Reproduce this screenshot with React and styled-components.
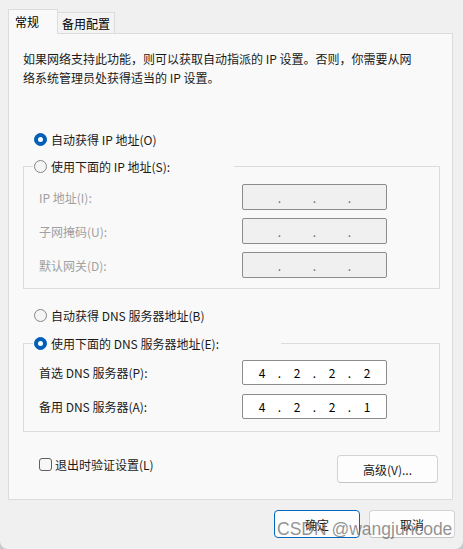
import React from 'react';
import styled, { createGlobalStyle } from 'styled-components';

const GlobalStyle = createGlobalStyle`
  html, body {
    margin: 0;
    padding: 0;
    background: #c9c9c9;
  }
  body {
    font-family: "Noto Sans CJK SC", "Noto Sans", sans-serif;
    font-size: 12px;
    color: #1a1a1a;
  }
`;

// **** window frame
const Window = styled.div`
  position: relative;
  box-sizing: border-box;
  width: 463px;
  height: 549px;
  padding: 9px 10px 0 8px;
  background: #f0f0f0;
  border-radius: 0 0 8px 8px;
  overflow: hidden;
`;

// **** tabs
const TabRow = styled.div`
  display: flex;
  align-items: flex-end;
  height: 25px;
  margin-bottom: -1px;
  position: relative;
  z-index: 1;
`;

const Tab = styled.div`
  box-sizing: border-box;
  display: flex;
  align-items: center;
  height: ${(p) => (p.$active ? '25px' : '21px')};
  width: ${(p) => (p.$active ? '50px' : '57px')};
  margin-bottom: ${(p) => (p.$active ? '0' : '1px')};
  padding-left: ${(p) => (p.$active ? '6px' : '0')};
  justify-content: ${(p) => (p.$active ? 'flex-start' : 'center')};
  background: ${(p) => (p.$active ? '#f9f9f9' : '#f3f3f3')};
  border: 1px solid #dcdcdc;
  border-bottom: none;
  border-left: ${(p) => (p.$active ? '1px solid #dcdcdc' : 'none')};
  color: #000;
  padding-bottom: ${(p) => (p.$active ? '2px' : '0')};
`;

// **** panel
const Panel = styled.div`
  box-sizing: border-box;
  width: 445px;
  display: flex;
  flex-direction: column;
  padding: 15px 13px 16px 14px;
  background: #f9f9f9;
  border: 1px solid #dcdcdc;
`;

const Intro = styled.p`
  margin: 0;
  line-height: 19px;
  white-space: nowrap;
  color: #1a1a1a;
`;

const RadioRow = styled.label`
  display: flex;
  align-items: center;
  gap: 4px;
  height: 19px;
  margin-top: ${(p) => p.$mt || 0}px;
  padding-left: ${(p) => (p.$legend ? 1 : 11)}px;
  color: #1a1a1a;
  white-space: nowrap;
`;

const RadioDot = styled.span`
  box-sizing: border-box;
  flex: none;
  width: 13px;
  height: 13px;
  border-radius: 50%;
  background: ${(p) => (p.$on ? '#005fb8' : '#f5f5f5')};
  border: 1px solid ${(p) => (p.$on ? '#005fb8' : '#858585')};
  display: flex;
  align-items: center;
  justify-content: center;
  &::after {
    content: '';
    display: ${(p) => (p.$on ? 'block' : 'none')};
    width: 5px;
    height: 5px;
    border-radius: 50%;
    background: #fff;
  }
`;

const Group = styled.fieldset`
  box-sizing: border-box;
  width: 417px;
  margin: ${(p) => p.$mt}px 0 0 0;
  padding: 0;
  border: 1px solid #dcdcdc;
  min-width: 0;
`;

const Legend = styled.legend`
  box-sizing: border-box;
  width: ${(p) => p.$w}px;
  margin-left: 9px;
  padding: 0;
`;

const Rows = styled.div`
  display: grid;
  grid-template-columns: 203px 145px;
  row-gap: ${(p) => p.$gap}px;
  padding: ${(p) => p.$pt}px 0 ${(p) => p.$pb}px 15px;
  align-items: center;
`;

const FieldLabel = styled.span`
  color: ${(p) => (p.$disabled ? '#a0a0a0' : '#1a1a1a')};
  white-space: nowrap;
`;

const IpBox = styled.div`
  box-sizing: border-box;
  display: flex;
  align-items: center;
  height: ${(p) => p.$h}px;
  padding-left: 6px;
  background: ${(p) => (p.$disabled ? '#f0f0f0' : '#ffffff')};
  border: 1px solid #8c8c8c;
  border-radius: 2px;
  color: ${(p) => (p.$disabled ? '#6d6d6d' : '#000')};
`;

const Octet = styled.span`
  width: 26px;
  text-align: center;
`;

const Dot = styled.span`
  width: 9px;
  text-align: center;
`;

const Footer = styled.div`
  display: flex;
  justify-content: space-between;
  align-items: flex-start;
  margin-top: 23px;
`;

const CheckRow = styled.label`
  display: flex;
  align-items: center;
  gap: 3px;
  height: 19px;
  padding-left: 16px;
  color: #1a1a1a;
`;

const CheckBox = styled.span`
  box-sizing: border-box;
  width: 13px;
  height: 13px;
  border: 1px solid #5f5f5f;
  border-radius: 3px;
  background: #f7f7f7;
`;

const Button = styled.button`
  box-sizing: border-box;
  width: ${(p) => p.$w}px;
  height: 28px;
  margin: 0;
  padding: 0;
  font: inherit;
  color: #1a1a1a;
  background: #fdfdfd;
  border: 1px solid ${(p) => (p.$primary ? '#0067c0' : '#d3d3d3')};
  border-bottom-color: ${(p) => (p.$primary ? '#0067c0' : '#c4c4c4')};
  border-radius: 4px;
`;

const DialogButtons = styled.div`
  display: flex;
  justify-content: flex-end;
  gap: 9px;
  margin: 10px -2px 0 0;
`;

// watermark lies over the dialog buttons
const Watermark = styled.div`
  position: absolute;
  left: 277px;
  top: 519px;
  font-family: "Liberation Sans", Arial, sans-serif;
  font-size: 17.5px;
  color: rgba(105, 105, 105, 0.72);
  white-space: nowrap;
  pointer-events: none;
`;

const Radio = ({ on, children, mt, legend }) => (
  <RadioRow $mt={mt} $legend={legend}>
    <RadioDot $on={on} />
    {children}
  </RadioRow>
);

const Ip = ({ value, disabled, h }) => {
  const parts = value || ['', '', '', ''];
  return (
    <IpBox $disabled={disabled} $h={h}>
      {parts.map((p, i) => (
        <React.Fragment key={i}>
          <Octet>{p}</Octet>
          {i < 3 && <Dot>.</Dot>}
        </React.Fragment>
      ))}
    </IpBox>
  );
};

const App = () => {
  return (
    <>
      <GlobalStyle />
      <Window>
        <TabRow>
          <Tab $active>常规</Tab>
          <Tab>备用配置</Tab>
        </TabRow>
        <Panel>
          <Intro>
            如果网络支持此功能，则可以获取自动指派的 IP 设置。否则，你需要从网
            <br />
            络系统管理员处获得适当的 IP 设置。
          </Intro>

          <Radio on mt={43}>自动获得 IP 地址(O)</Radio>

          <Group $mt={8}>
            <Legend $w={201}>
              <Radio legend>使用下面的 IP 地址(S):</Radio>
            </Legend>
            <Rows $gap={8} $pt={8} $pb={10}>
              <FieldLabel $disabled>IP 地址(I):</FieldLabel>
              <Ip disabled h={26} />
              <FieldLabel $disabled>子网掩码(U):</FieldLabel>
              <Ip disabled h={26} />
              <FieldLabel $disabled>默认网关(D):</FieldLabel>
              <Ip disabled h={26} />
            </Rows>
          </Group>

          <Radio mt={17}>自动获得 DNS 服务器地址(B)</Radio>

          <Group $mt={9}>
            <Legend $w={248}>
              <Radio on legend>使用下面的 DNS 服务器地址(E):</Radio>
            </Legend>
            <Rows $gap={9} $pt={7} $pb={12}>
              <FieldLabel>首选 DNS 服务器(P):</FieldLabel>
              <Ip value={['4', '2', '2', '2']} h={25} />
              <FieldLabel>备用 DNS 服务器(A):</FieldLabel>
              <Ip value={['4', '2', '2', '1']} h={25} />
            </Rows>
          </Group>

          <Footer>
            <CheckRow>
              <CheckBox />
              退出时验证设置(L)
            </CheckRow>
            <Button $w={101} style={{ marginRight: 1 }}>高级(V)...</Button>
          </Footer>
        </Panel>

        <DialogButtons>
          <Button $w={86} $primary>确定</Button>
          <Button $w={86}>取消</Button>
        </DialogButtons>

        <Watermark>CSDN @wangjuncode</Watermark>
      </Window>
    </>
  );
};

export default App;
